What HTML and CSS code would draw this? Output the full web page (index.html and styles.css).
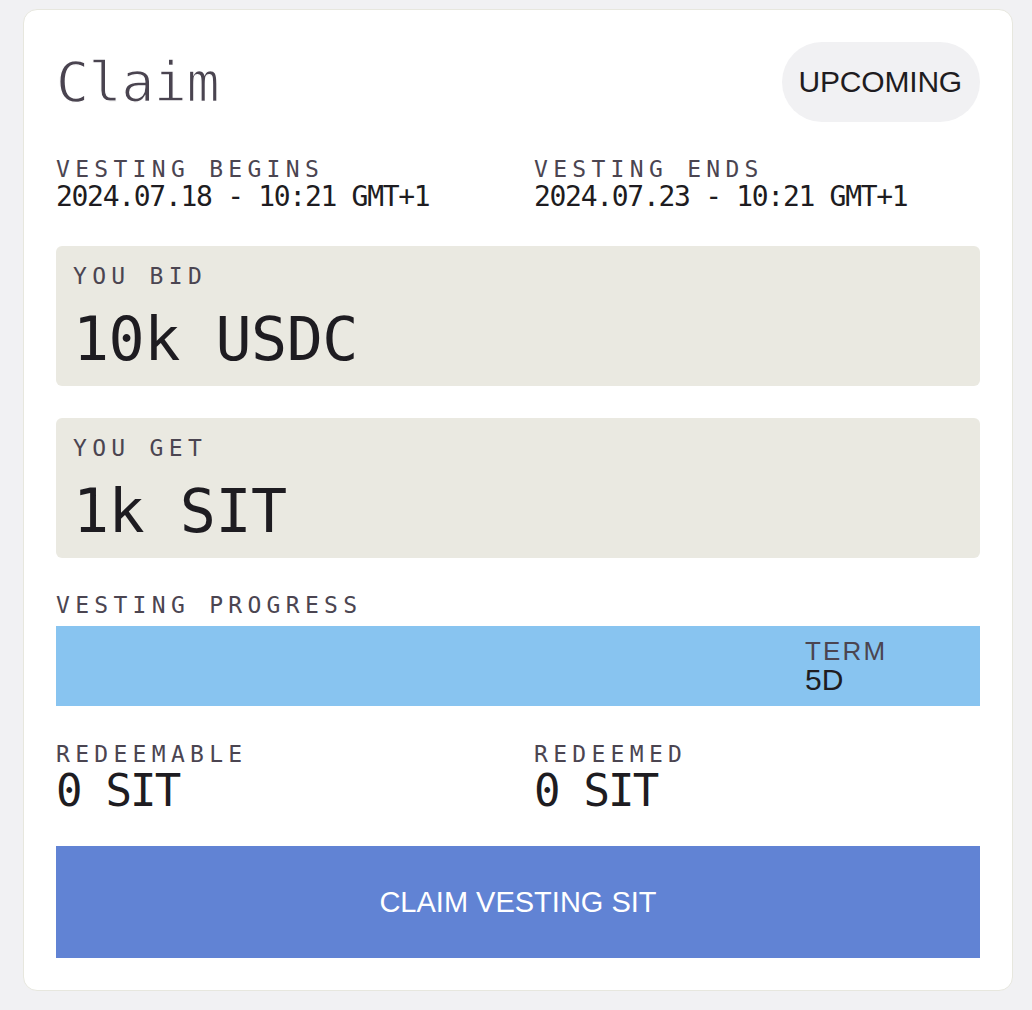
FILE: index.html
```html
<!DOCTYPE html>
<html lang="en">
<head>
<meta charset="utf-8">
<title>Claim</title>
<link rel="stylesheet" href="styles.css">
</head>
<body>
<section class="card">
  <header class="head">
    <h1 class="title">Claim</h1>
    <span class="badge">UPCOMING</span>
  </header>

  <div class="pair dates">
    <div class="field">
      <div class="label">VESTING BEGINS</div>
      <div class="date">2024.07.18 - 10:21 GMT+1</div>
    </div>
    <div class="field">
      <div class="label">VESTING ENDS</div>
      <div class="date">2024.07.23 - 10:21 GMT+1</div>
    </div>
  </div>

  <div class="box">
    <div class="label">YOU BID</div>
    <div class="big">10k USDC</div>
  </div>

  <div class="box box-second">
    <div class="label">YOU GET</div>
    <div class="big">1k SIT</div>
  </div>

  <div class="label progress-label">VESTING PROGRESS</div>
  <div class="bar">
    <div class="term">
      <div class="term-label">TERM</div>
      <div class="term-value">5D</div>
    </div>
  </div>

  <div class="pair redeem">
    <div class="field">
      <div class="label">REDEEMABLE</div>
      <div class="amount">0 SIT</div>
    </div>
    <div class="field">
      <div class="label">REDEEMED</div>
      <div class="amount">0 SIT</div>
    </div>
  </div>

  <button class="claim" type="button">CLAIM VESTING SIT</button>
</section>
</body>
</html>
```
FILE: styles.css
```css
* { box-sizing: border-box; }

html, body {
  margin: 0;
  background: #f1f1f3;
}

body {
  padding: 9px 0 20px 23px;
  font-family: "DejaVu Sans Mono", "Liberation Mono", monospace;
  color: #1e1c21;
}

.card {
  width: 990px;
  background: #ffffff;
  border: 1px solid #e7e7de;
  border-radius: 14px;
  padding: 32px 32px 32px 32px;
  display: flex;
  flex-direction: column;
}

.head {
  height: 80px;
  display: flex;
  align-items: center;
  justify-content: space-between;
}

.title {
  margin: 0;
  font-family: "DejaVu Sans Mono", monospace;
  font-weight: 400;
  font-size: 55px;
  line-height: 1;
  color: #4a4450;
  -webkit-text-stroke: 1.3px #ffffff;
  paint-order: normal;
  letter-spacing: -0.5px;
}

.badge {
  height: 80px;
  padding: 0 18px 0 17px;
  border-radius: 40px;
  background: #f1f1f3;
  display: flex;
  align-items: center;
  font-family: "Liberation Sans", Arial, sans-serif;
  font-size: 30px;
  letter-spacing: -0.2px;
  color: #1e1c21;
}

.pair {
  display: grid;
  grid-template-columns: 1fr 1fr;
  column-gap: 32px;
}

.dates { margin-top: 36px; }

.label {
  font-family: "DejaVu Sans Mono", monospace;
  font-size: 23px;
  line-height: 23px;
  letter-spacing: 5.3px;
  color: #4b4551;
  white-space: nowrap;
}

.date {
  margin-top: 2px;
  font-size: 28px;
  line-height: 28px;
  letter-spacing: -1.3px;
  color: #1e1c21;
  white-space: nowrap;
}

.box {
  margin-top: 35px;
  height: 140px;
  background: #eae9e1;
  border-radius: 6px;
  padding: 19px 16px 0 17px;
}

.box-second { margin-top: 32px; }

.big {
  margin-top: 21px;
  font-size: 60px;
  line-height: 60px;
  letter-spacing: -0.5px;
  color: #1e1c21;
  white-space: nowrap;
}

.progress-label { margin-top: 36px; }

.bar {
  margin-top: 9px;
  height: 80px;
  background: #88c4f0;
  display: flex;
  align-items: center;
  justify-content: flex-end;
  padding-right: 98px;
}

.term {
  width: 77px;
  display: flex;
  flex-direction: column;
}

.term-label {
  font-family: "Liberation Sans", Arial, sans-serif;
  font-size: 26px;
  line-height: 26px;
  letter-spacing: 2.2px;
  color: #4b4551;
}

.term-value {
  margin-top: 1px;
  font-family: "Liberation Sans", Arial, sans-serif;
  font-size: 30px;
  line-height: 30px;
  color: #1e1c21;
}

.redeem { margin-top: 37px; }

.amount {
  margin-top: 3px;
  font-size: 44px;
  line-height: 44px;
  letter-spacing: -1.8px;
  color: #1e1c21;
  white-space: nowrap;
}

.claim {
  margin-top: 33px;
  height: 112px;
  width: 100%;
  border: 0;
  border-radius: 0;
  background: #6183d4;
  color: #ffffff;
  font-family: "Liberation Sans", Arial, sans-serif;
  font-size: 29px;
  letter-spacing: 0;
  cursor: pointer;
}
```
